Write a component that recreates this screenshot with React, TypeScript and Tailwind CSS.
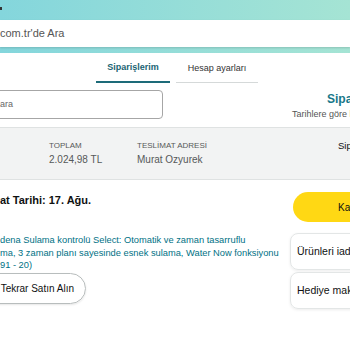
export default function App() {
  return (
    <div
      className="relative w-[350px] h-[350px] overflow-hidden bg-white text-[#0f1111]"
      style={{ fontFamily: '"Liberation Sans", Arial, sans-serif' }}
    >
      {/* header */}
      <div className="bg-gradient-to-r from-[#84d6dc] to-[#a5e4d4] pt-[20px] pb-[6px]">
        <div className="flex h-[27px] items-center bg-white shadow-[0_1px_2px_rgba(0,0,0,0.15)]">
          <span className="text-[11px] text-[#555]">com.tr'de Ara</span>
        </div>
      </div>
      <div className="absolute left-0 top-[7px] h-[3px] w-[2px] bg-[#333]" />

      {/* tabs */}
      <div className="flex gap-[6px] pl-[96px]">
        <div className="flex h-[30px] w-[74px] shrink-0 items-center justify-center border-b-2 border-[#1d6b79] pt-[2px] text-[9px] font-bold text-[#1a6473]">
          Siparişlerim
        </div>
        <div className="flex h-[30px] w-[82px] shrink-0 items-center justify-center border-b border-[#d5d9d9] pt-[2px] text-[9px] text-[#333]">
          Hesap ayarları
        </div>
      </div>

      {/* search + title */}
      <div className="mt-[7px] flex w-[500px]">
        <div className="-ml-[10px] flex h-[29px] w-[173px] shrink-0 items-center rounded-[4px] border border-[#a6a6a6] pl-[9px] text-[9px] text-[#666]">
          ara
        </div>
        <div className="flex shrink-0 flex-col whitespace-nowrap">
          <span className="pl-[164px] pt-[2px] text-[12px] font-bold leading-[14px] text-[#17788a]">Siparişlerim</span>
          <span className="pl-[129px] pt-[3px] text-[9px] leading-[10px] text-[#555]">Tarihlere göre listele</span>
        </div>
      </div>

      {/* order info bar */}
      <div className="mt-[8px] flex h-[53px] w-[500px] items-start whitespace-nowrap border-y border-[#dfe2e2] bg-[#f2f3f3] pt-[13px]">
        <div className="ml-[49px] flex w-[88px] shrink-0 flex-col">
          <span className="text-[8px] leading-[10px] text-[#565959]">TOPLAM</span>
          <span className="pt-[3px] text-[10px] leading-[12px] text-[#565959]">2.024,98 TL</span>
        </div>
        <div className="flex w-[201px] shrink-0 flex-col">
          <span className="text-[8px] leading-[10px] text-[#565959]">TESLİMAT ADRESİ</span>
          <span className="pt-[3px] text-[10px] leading-[12px] text-[#565959]">Murat Ozyurek</span>
        </div>
        <span className="shrink-0 text-[9.5px] leading-[10px] text-[#0f1111]">Sipariş</span>
      </div>

      {/* shipment body */}
      <div className="flex w-[500px] whitespace-nowrap">
        <div className="flex w-[290px] shrink-0 flex-col">
          <span className="pt-[13px] text-[11px] font-bold leading-[14px]">at Tarihi: 17. Ağu.</span>
          <div className="mt-[27px] text-[9.3px] leading-[12.5px] text-[#007185]">
            <div>dena Sulama kontrolü Select: Otomatik ve zaman tasarruflu</div>
            <div>ma, 3 zaman planı sayesinde esnek sulama, Water Now fonksiyonu</div>
            <div>91 - 20)</div>
          </div>
          <div className="mt-[1px] -ml-[20px] flex h-[31px] w-[106px] items-center justify-end rounded-full border border-[#b8bdbd] pr-[11px] text-[10px] text-[#0f1111] shadow-[0_1px_2px_rgba(15,17,17,0.1)]">
            Tekrar Satın Alın
          </div>
        </div>
        <div className="flex shrink-0 flex-col">
          <div className="mt-[12px] ml-[3px] flex h-[30px] w-[140px] items-center rounded-full bg-[#ffd814] pl-[45px] text-[10px] text-[#0f1111]">
            Kargomu takip et
          </div>
          <div className="mt-[11px] flex h-[37px] w-[140px] items-center rounded-[8px] border border-[#e3e6e6] pl-[6px] text-[10.5px] shadow-[0_1px_3px_rgba(15,17,17,0.08)]">
            Ürünleri iade et
          </div>
          <div className="mt-[2px] flex h-[37px] w-[140px] items-center rounded-[8px] border border-[#e3e6e6] pl-[6px] text-[10.5px] shadow-[0_1px_3px_rgba(15,17,17,0.08)]">
            Hediye makbuzu
          </div>
        </div>
      </div>
    </div>
  );
}
